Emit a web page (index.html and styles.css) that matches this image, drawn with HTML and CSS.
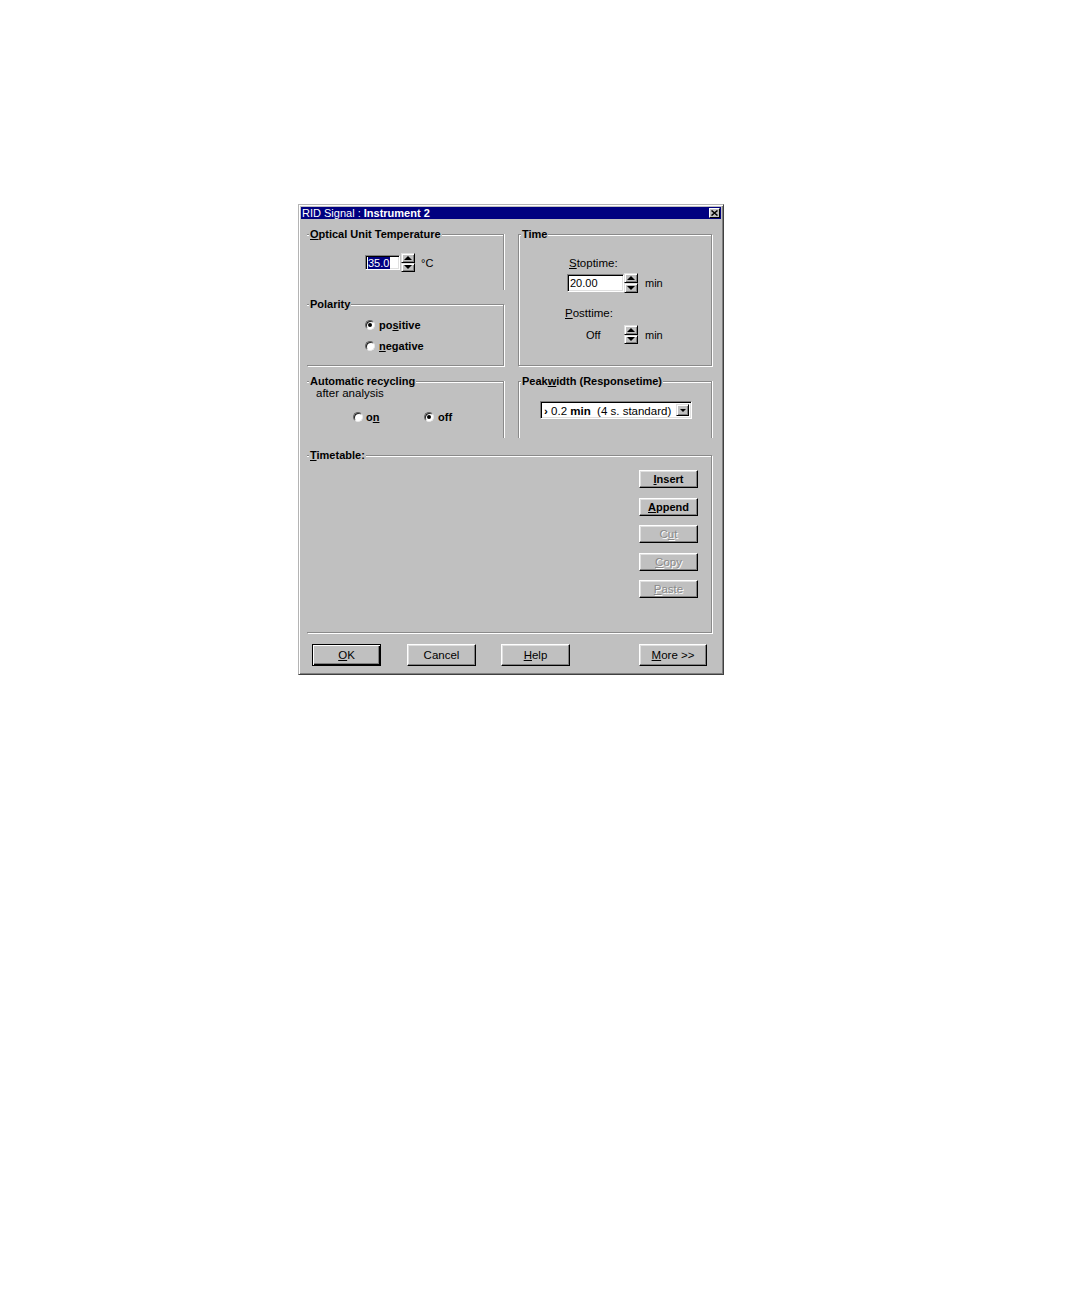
FILE: index.html
```html
<!DOCTYPE html>
<html>
<head>
<meta charset="utf-8">
<title>RID Signal : Instrument 2</title>
<link rel="stylesheet" href="styles.css">
</head>
<body>
<div class="dialog">
  <div class="titlebar">
    <span class="title">RID Signal : <b>Instrument 2</b></span>
    <span class="close"><svg width="7" height="6" viewBox="0 0 7 6"><path d="M0.5 0.5 L6.5 5.5 M6.5 0.5 L0.5 5.5" stroke="#000" stroke-width="1.5" fill="none"/></svg></span>
  </div>
  <div class="content">
    <div class="grid">
      <div class="col-left">
        <div class="group g-optical">
          <div class="legend"><u>O</u>ptical Unit Temperature</div>
          <div class="spinrow">
            <div class="field f-temp"><span class="sel">35.0</span></div>
            <div class="spin"><div class="sbtn"><i class="up"></i></div><div class="sbtn"><i class="down"></i></div></div>
            <span class="unit">°C</span>
          </div>
        </div>
        <div class="group g-polarity">
          <div class="legend">Polarity</div>
          <div class="radiorow r-first"><span class="radio checked"><i></i></span><span class="rtext">po<u>s</u>itive</span></div>
          <div class="radiorow"><span class="radio"></span><span class="rtext"><u>n</u>egative</span></div>
        </div>
      </div>
      <div class="group g-time">
        <div class="legend">Time</div>
        <div class="tlabel t1"><u>S</u>toptime:</div>
        <div class="trow r1">
          <div class="field f-stop">20.00</div>
          <div class="spin tall"><div class="sbtn"><i class="up"></i></div><div class="sbtn"><i class="down"></i></div></div>
          <span class="unit">min</span>
        </div>
        <div class="tlabel t2"><u>P</u>osttime:</div>
        <div class="trow r2">
          <span class="offval">Off</span>
          <div class="spin"><div class="sbtn"><i class="up"></i></div><div class="sbtn"><i class="down"></i></div></div>
          <span class="unit">min</span>
        </div>
      </div>
      <div class="group g-auto">
        <div class="legend">Automatic recycling</div>
        <div class="sublegend">after analysis</div>
        <div class="radiorow r-auto">
          <span class="ritem"><span class="radio"></span><span class="rtext tight">o<u>n</u></span></span>
          <span class="ritem"><span class="radio checked"><i></i></span><span class="rtext">off</span></span>
        </div>
      </div>
      <div class="group g-peak">
        <div class="legend">Peak<u>w</u>idth (Responsetime)</div>
        <div class="combo">
          <div class="combotext"><b>&rsaquo;</b> 0.2 <b>min</b>&nbsp; (4 s. standard)</div>
          <div class="combobtn"><i class="down"></i></div>
        </div>
      </div>
    </div>
    <div class="group g-table">
      <div class="legend"><u>T</u>imetable:</div>
      <div class="tbuttons">
        <div class="btn small strong"><u>I</u>nsert</div>
        <div class="btn small strong"><u>A</u>ppend</div>
        <div class="btn small disabled">C<u>u</u>t</div>
        <div class="btn small disabled"><u>C</u>opy</div>
        <div class="btn small disabled"><u>P</u>aste</div>
      </div>
    </div>
    <div class="btnrow">
      <div class="btn big default"><u>O</u>K</div>
      <div class="btn big b-cancel">Cancel</div>
      <div class="btn big b-help"><u>H</u>elp</div>
      <div class="btn big b-more"><u>M</u>ore &gt;&gt;</div>
    </div>
  </div>
</div>
</body>
</html>
```

FILE: styles.css
```css
* { box-sizing: border-box; }

html, body {
  margin: 0;
  padding: 0;
  background: #ffffff;
}

body {
  padding: 204px 0 0 298px;
  font-family: "Liberation Sans", Arial, sans-serif;
  font-size: 11px;
  color: #000;
}

u { text-decoration: underline; text-underline-offset: 1px; }

.dialog {
  width: 426px;
  height: 471px;
  background: #c0c0c0;
  border: 1px solid;
  border-color: #b4b4b4 #404040 #404040 #b4b4b4;
  box-shadow: inset 1px 1px 0 #ffffff, inset -1px -1px 0 #808080;
  padding: 2px;
}

.titlebar {
  height: 12px;
  background: #000080;
  color: #fff;
  display: flex;
  align-items: center;
  justify-content: space-between;
  padding: 0 1px 0 1px;
}

.title {
  font-size: 11px;
  line-height: 12px;
  white-space: nowrap;
}

.title b { font-weight: bold; }

.close {
  width: 11px;
  height: 10px;
  background: #c0c0c0;
  border: 1px solid;
  border-color: #fff #000 #000 #fff;
  display: flex;
  align-items: center;
  justify-content: center;
}

.close svg { display: block; }

.content {
  padding: 15px 9px 0 6px;
}

.grid {
  display: grid;
  grid-template-columns: 197px 194px;
  grid-template-rows: 132px 57px;
  column-gap: 14px;
  row-gap: 15px;
}

.col-left {
  display: flex;
  flex-direction: column;
  gap: 14px;
}

.group {
  border-top: 1px solid #8a8a8a;
  box-shadow: inset 0 1px 0 #ffffff;
}

.legend {
  width: fit-content;
  margin: -7px 0 0 2px;
  padding: 0 1px;
  background: #c0c0c0;
  font-weight: bold;
  line-height: 12px;
  white-space: nowrap;
  position: relative;
}

.g-optical {
  height: 56px;
  border-right: 1px solid #8a8a8a;
  box-shadow: inset 0 1px 0 #fff, 1px 0 0 #fff;
}

.g-polarity {
  height: 62px;
  border-right: 1px solid #8a8a8a;
  border-bottom: 1px solid #8a8a8a;
  box-shadow: inset 0 1px 0 #fff, 1px 1px 0 #fff;
}

.g-time {
  height: 132px;
  border: 1px solid #8a8a8a;
  box-shadow: inset 1px 1px 0 #fff, 1px 1px 0 #fff;
}

.g-auto {
  height: 57px;
  border-right: 1px solid #8a8a8a;
  box-shadow: inset 0 1px 0 #fff, 1px 0 0 #fff;
}

.g-peak {
  height: 57px;
  border-left: 1px solid #8a8a8a;
  border-right: 1px solid #8a8a8a;
  box-shadow: inset 1px 1px 0 #fff, 1px 0 0 #fff;
}

.g-table {
  margin-top: 17px;
  height: 178px;
  border-right: 1px solid #8a8a8a;
  border-bottom: 1px solid #8a8a8a;
  box-shadow: inset 0 1px 0 #fff, 1px 1px 0 #fff;
}

/* fields */
.field {
  background: #fff;
  border: 1px solid;
  border-color: #808080 #fff #fff #808080;
  box-shadow: inset 1px 1px 0 #000, inset -1px -1px 0 #dfdfdf;
  padding: 0 0 0 2px;
  display: flex;
  align-items: center;
  font-size: 11px;
  line-height: 12px;
}

.f-temp {
  width: 35px;
  height: 15px;
}

.sel {
  background: #000080;
  color: #fff;
  padding: 0 1px 0 0;
  line-height: 12px;
}

.f-stop {
  width: 57px;
  height: 18px;
  padding-left: 2px;
}

.spinrow {
  display: flex;
  align-items: center;
  margin: 13px 0 0 58px;
}

.spin {
  width: 14px;
  height: 19px;
  display: flex;
  flex-direction: column;
  margin-left: 1px;
}

.spin.tall {
  height: 20px;
  margin-left: 0;
}

.sbtn {
  flex: 1;
  background: #c0c0c0;
  border: 1px solid;
  border-color: #dfdfdf #000 #000 #dfdfdf;
  box-shadow: inset 1px 1px 0 #fff, inset -1px -1px 0 #808080;
  display: flex;
  align-items: center;
  justify-content: center;
}

i.up, i.down {
  display: block;
  width: 0;
  height: 0;
  border-left: 4px solid transparent;
  border-right: 4px solid transparent;
}

i.up { border-bottom: 4px solid #000; }
i.down { border-top: 4px solid #000; }

.combobtn i.down {
  border-left-width: 3px;
  border-right-width: 3px;
  border-top-width: 3px;
}

.unit {
  margin-left: 6px;
  line-height: 12px;
}

.trow .unit { margin-left: 7px; }

/* radios */
.radiorow {
  display: flex;
  align-items: center;
  height: 13px;
  margin-top: 8px;
  padding-left: 58px;
}

.radio {
  width: 10px;
  height: 10px;
  border-radius: 50%;
  background: #fff;
  border: 1px solid;
  border-color: #606060 #e8e8e8 #e8e8e8 #606060;
  box-shadow: inset 1px 1px 0 #202020;
  display: flex;
  align-items: center;
  justify-content: center;
  flex: none;
}

.radio i {
  display: block;
  width: 4px;
  height: 4px;
  border-radius: 50%;
  background: #000;
}

.rtext {
  margin-left: 4px;
  font-weight: bold;
  line-height: 12px;
}

.rtext.tight { margin-left: 3px; }

.sublegend {
  padding-left: 9px;
  line-height: 12px;
  font-size: 11.5px;
}

.r-auto {
  margin-top: 11px;
  padding-left: 46px;
}

.ritem {
  display: flex;
  align-items: center;
}

.ritem:first-child { width: 71px; }

/* time group */
.tlabel {
  line-height: 12px;
  font-size: 11.5px;
}

.t1 { margin: 17px 0 0 50px; }
.t2 { margin: 14px 0 0 46px; }

.trow {
  display: flex;
  align-items: center;
}

.r1 {
  margin: 4px 0 0 48px;
  height: 20px;
}

.r2 {
  margin: 6px 0 0 67px;
  height: 19px;
}

.offval {
  width: 38px;
  line-height: 12px;
}

.r2 .spin { margin-left: 0; }

/* combo */
.combo {
  width: 152px;
  height: 18px;
  margin: 14px 0 0 21px;
  background: #fff;
  border: 1px solid;
  border-color: #808080 #fff #fff #808080;
  box-shadow: inset 1px 1px 0 #000, inset -1px -1px 0 #dfdfdf;
  padding: 2px;
  display: flex;
  align-items: stretch;
}

.combotext {
  flex: 1;
  line-height: 14px;
  padding-left: 1px;
  white-space: nowrap;
  font-size: 11.5px;
}

.combobtn {
  width: 13px;
  background: #c0c0c0;
  border: 1px solid;
  border-color: #dfdfdf #000 #000 #dfdfdf;
  box-shadow: inset 1px 1px 0 #fff, inset -1px -1px 0 #808080;
  display: flex;
  align-items: center;
  justify-content: center;
}

/* buttons */
.btn {
  background: #c0c0c0;
  border: 1px solid;
  border-color: #fff #000 #000 #fff;
  box-shadow: inset -1px -1px 0 #808080, inset 1px 1px 0 #dfdfdf;
  display: flex;
  align-items: center;
  justify-content: center;
  line-height: 12px;
  white-space: nowrap;
}

.tbuttons {
  display: flex;
  flex-direction: column;
  align-items: flex-end;
  gap: 9.5px;
  margin-top: 9px;
  padding-right: 13px;
}

.btn.small {
  width: 59px;
  height: 18px;
}

.btn.strong { font-weight: bold; }

.btn.disabled {
  color: #8a8a8a;
  text-shadow: 1px 1px 0 #fff;
  font-size: 11.5px;
}

.btnrow {
  display: flex;
  margin-top: 11px;
  padding-left: 5px;
}

.btn.big {
  width: 69px;
  height: 22px;
  font-size: 11.5px;
}

.btn.default {
  border: 1px solid #000;
  box-shadow: inset 1px 1px 0 #fff, inset -1px -1px 0 #000, inset -2px -2px 0 #808080;
}

.b-cancel { margin-left: 26px; }
.b-help { margin-left: 25px; }
.btn.b-more {
  width: 68px;
  margin-left: auto;
  margin-right: 5px;
}
```
